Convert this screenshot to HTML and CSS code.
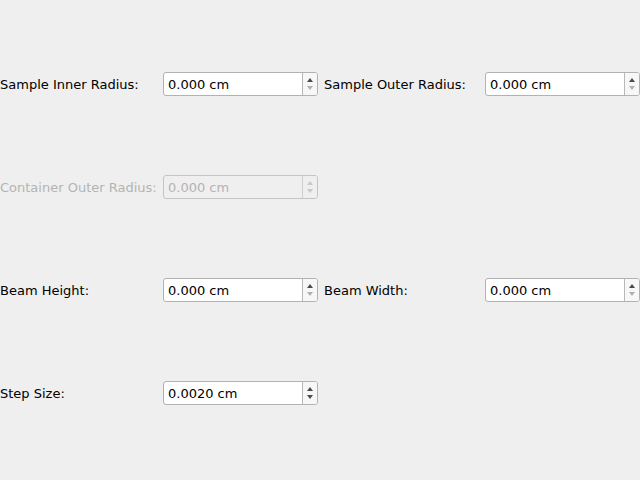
FILE: index.html
```html
<!DOCTYPE html>
<html>
<head>
<meta charset="utf-8">
<link rel="stylesheet" href="styles.css">
</head>
<body>
<div class="form">
  <div class="label">Sample Inner Radius:</div>
  <div class="spin"><span class="val">0.000 cm</span><span class="btns"><span class="up"></span><span class="down off"></span></span></div>
  <div class="label">Sample Outer Radius:</div>
  <div class="spin"><span class="val">0.000 cm</span><span class="btns"><span class="up"></span><span class="down off"></span></span></div>

  <div class="label dis">Container Outer Radius:</div>
  <div class="spin dis"><span class="val">0.000 cm</span><span class="btns"><span class="up"></span><span class="down"></span></span></div>
  <div></div>
  <div></div>

  <div class="label">Beam Height:</div>
  <div class="spin"><span class="val">0.000 cm</span><span class="btns"><span class="up"></span><span class="down off"></span></span></div>
  <div class="label">Beam Width:</div>
  <div class="spin"><span class="val">0.000 cm</span><span class="btns"><span class="up"></span><span class="down off"></span></span></div>

  <div class="label">Step Size:</div>
  <div class="spin"><span class="val">0.0020 cm</span><span class="btns"><span class="up"></span><span class="down"></span></span></div>
  <div></div>
  <div></div>
</div>
</body>
</html>
```

FILE: styles.css
```css
html, body {
  margin: 0;
  padding: 0;
  background: #efefef;
  width: 640px;
  height: 480px;
  overflow: hidden;
}
body {
  font-family: "DejaVu Sans", sans-serif;
  font-size: 13px;
  color: #000;
}
.form {
  display: grid;
  grid-template-columns: 163px 155px 167px 155px;
  column-gap: 0;
  grid-template-rows: repeat(4, 24px);
  row-gap: 79px;
  padding-top: 72px;
}
.form > :nth-child(4n+3) {
  padding-left: 6px;
}
.label {
  display: flex;
  align-items: center;
  white-space: nowrap;
}
.label.dis {
  color: #b4b4b4;
}
.spin {
  box-sizing: border-box;
  height: 24px;
  border: 1px solid #b2b2b2;
  border-radius: 3px;
  background: #fff;
  display: flex;
  align-items: stretch;
}
.spin.dis {
  background: #efefef;
  border-color: #c4c4c4;
  color: #b4b4b4;
}
.val {
  flex: 1;
  display: flex;
  align-items: center;
  padding-left: 4px;
}
.btns {
  width: 14px;
  border-left: 1px solid #b8b8b8;
  background: #f7f7f7;
  border-radius: 0 2px 2px 0;
  display: flex;
  flex-direction: column;
  align-items: center;
  justify-content: center;
  gap: 4px;
}
.spin.dis .btns {
  border-left-color: #cfcfcf;
  background: #efefef;
}
.up, .down {
  width: 0;
  height: 0;
  border-left: 3.5px solid transparent;
  border-right: 3.5px solid transparent;
}
.up {
  border-bottom: 4px solid #4a4a4a;
}
.down {
  border-top: 4px solid #4a4a4a;
}
.down.off {
  border-top-color: #b0b0b0;
}
.spin.dis .up {
  border-bottom-color: #c8c8c8;
}
.spin.dis .down {
  border-top-color: #c8c8c8;
}
```
